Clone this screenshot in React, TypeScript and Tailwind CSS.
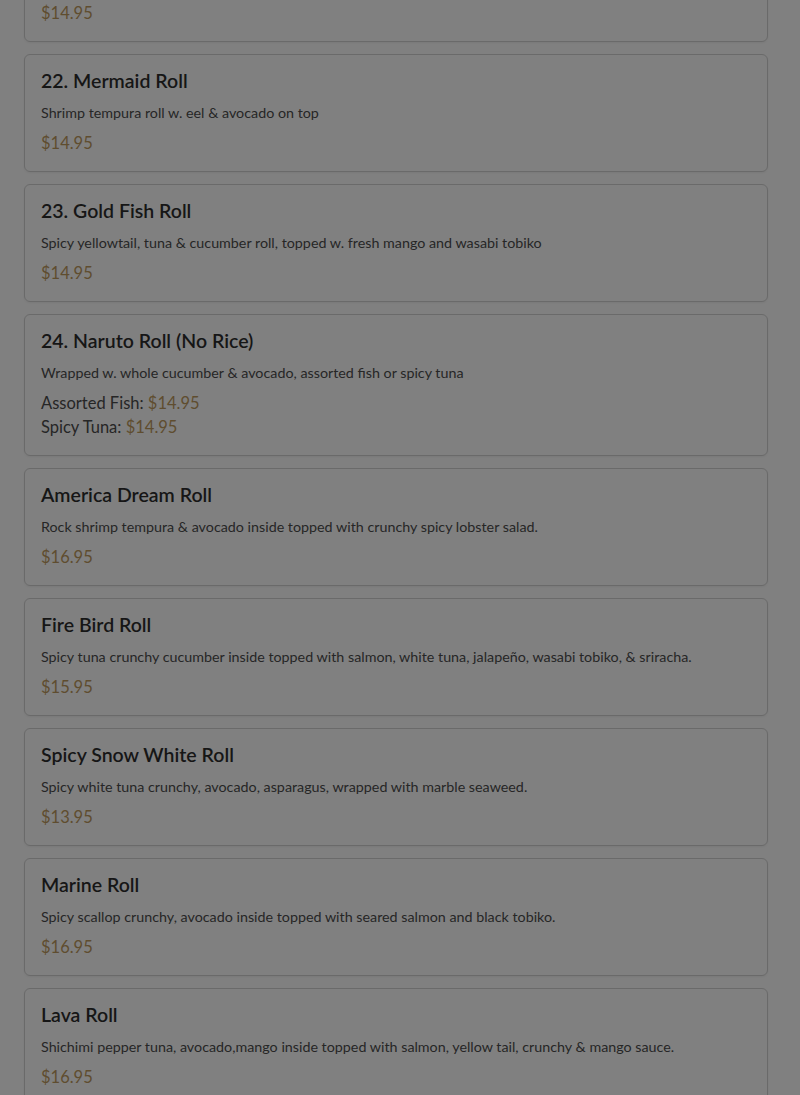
import React from 'react';

type Item = {
    name: string;
    desc: string;
    prices: { label?: string; price: string }[];
};

const items: Item[] = [
    { name: '22. Mermaid Roll', desc: 'Shrimp tempura roll w. eel & avocado on top', prices: [{ price: '$14.95' }] },
    { name: '23. Gold Fish Roll', desc: 'Spicy yellowtail, tuna & cucumber roll, topped w. fresh mango and wasabi tobiko', prices: [{ price: '$14.95' }] },
    {
        name: '24. Naruto Roll (No Rice)',
        desc: 'Wrapped w. whole cucumber & avocado, assorted fish or spicy tuna',
        prices: [
            { label: 'Assorted Fish:', price: '$14.95' },
            { label: 'Spicy Tuna:', price: '$14.95' },
        ],
    },
    { name: 'America Dream Roll', desc: 'Rock shrimp tempura & avocado inside topped with crunchy spicy lobster salad.', prices: [{ price: '$16.95' }] },
    { name: 'Fire Bird Roll', desc: 'Spicy tuna crunchy cucumber inside topped with salmon, white tuna, jalapeño, wasabi tobiko, & sriracha.', prices: [{ price: '$15.95' }] },
    { name: 'Spicy Snow White Roll', desc: 'Spicy white tuna crunchy, avocado, asparagus, wrapped with marble seaweed.', prices: [{ price: '$13.95' }] },
    { name: 'Marine Roll', desc: 'Spicy scallop crunchy, avocado inside topped with seared salmon and black tobiko.', prices: [{ price: '$16.95' }] },
    { name: 'Lava Roll', desc: 'Shichimi pepper tuna, avocado,mango inside topped with salmon, yellow tail, crunchy & mango sauce.', prices: [{ price: '$16.95' }] },
];

const MenuCard: React.FC<{ item: Item }> = ({ item }) =>
{
    return (
        <div className="border border-[#6a6a6a] rounded-md p-4 shadow-xs">
            <h3 className="text-[19.5px] leading-5 font-semibold text-[#161616]">{item.name}</h3>
            <p className="mt-3 text-[14.3px] leading-5 text-[#262626]">{item.desc}</p>
            <div className="mt-2">
                {item.prices.map((p, i) => (
                    <div key={i} className="text-[16.5px] leading-6 text-[#262626]">
                        {p.label && <span>{p.label} </span>}
                        <span className="text-[#5f4d2f]">{p.price}</span>
                    </div>
                ))}
            </div>
        </div>
    );
};

const App: React.FC = () =>
{
    return (
        <div className="min-h-screen bg-[#808080] overflow-hidden" style={{ fontFamily: 'Lato, "Open Sans", sans-serif' }}>
            <div className="flex flex-col gap-3 ml-6 mr-8">
                <div className="-mt-[16px] border border-[#6a6a6a] rounded-md p-4 shadow-xs">
                    <div className="text-[16.5px] leading-6 text-[#5f4d2f]">$14.95</div>
                </div>
                {items.map((item, i) => (
                    <MenuCard key={i} item={item} />
                ))}
            </div>
        </div>
    );
};

export default App;
